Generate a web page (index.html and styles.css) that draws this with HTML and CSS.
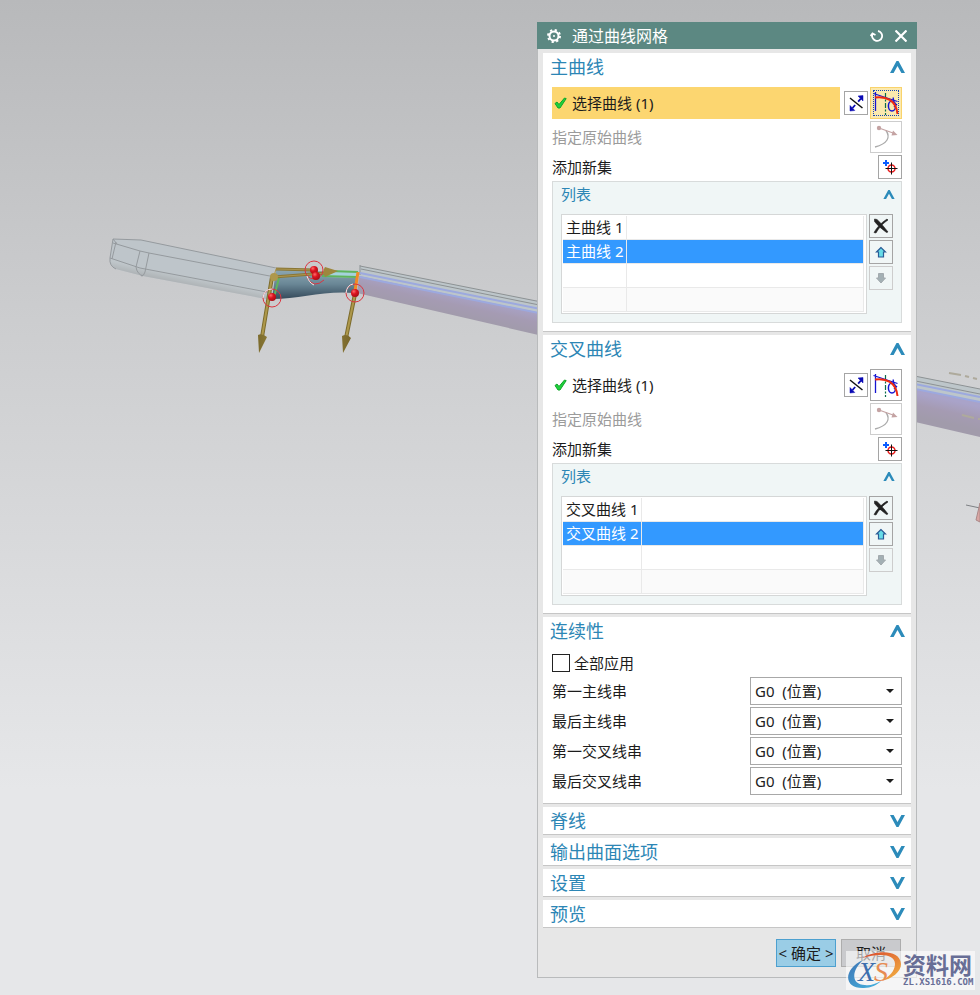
FILE: index.html
```
<!DOCTYPE html>
<html lang="zh-CN">
<head>
    <meta charset="UTF-8">
    <title>通过曲线网格</title>
    <link rel="stylesheet" href="styles.css">
</head>
<body>
    <!-- icons -->
    <svg class="sprite" aria-hidden="true">
        <symbol id="i-up" viewBox="0 0 15 12"><path d="M0 12 6.500 0h2L15 12h-3.600L7.500 5 3.600 12z"/></symbol>
        <symbol id="i-down" viewBox="0 0 15 12"><path d="M0 0 6.500 12h2L15 0h-3.600L7.500 7 3.600 0z"/></symbol>
        <symbol id="i-check" viewBox="0 0 13 12"><path d="M1 6.500 3 5l2 2.500L10.500 1l1.700.6L6 11H4z" fill="#1fd13c" stroke="#10a52a"/></symbol>
        <symbol id="i-reverse" viewBox="0 0 22 22">
            <path d="M5 6 17.500 16" stroke="#111" stroke-width="1.500"/>
            <path d="M7.500 16 16 6.500" stroke="#0a0ab4" stroke-width="1.800" stroke-dasharray="4 4.500"/>
            <path d="M18 3.500v5.500L13 4zM5 19v-5.500l4.800 5z" fill="#0a0ab4" stroke="#0a0ab4" stroke-width=".5"/>
        </symbol>
        <symbol id="i-curve" viewBox="0 0 30 30" fill="none">
            <path d="M14.500 5v22" stroke="#0b6b4a" stroke-width="1.200" stroke-dasharray="5 1.500 2 1.500"/>
            <path d="M4.500 4v19M2.500 5.500 26.500 13.500M22 9.500l1 4M26 16l-3 3" stroke="#1414d2" stroke-width="1.300"/>
            <ellipse cx="21" cy="18" rx="3.600" ry="5" stroke="#1414d2" stroke-width="1.500"/>
            <path d="M4 9.500C15 8 25 12 26.500 26" stroke="#ee2a10" stroke-width="2"/>
        </symbol>
        <symbol id="i-origin" viewBox="0 0 30 30" fill="none">
            <path d="M15 8.500c5 7 1 13.500-11 16.500" stroke="#aaa" stroke-width="1.300"/>
            <path d="M8 6l14 5" stroke="#c4a3a3" stroke-width="1.300"/>
            <circle cx="8" cy="6" r="2.200" fill="#c4a3a3"/>
            <path d="M20.500 13.500 22 8.500l4.500 4.500z" fill="#c4a3a3"/>
        </symbol>
        <symbol id="i-add" viewBox="0 0 22 22" fill="none">
            <path d="M7 4v6M4 7h6" stroke="#0b5cff" stroke-width="2"/>
            <circle cx="12.500" cy="12.500" r="3.500" stroke="#e81c1c" stroke-width="1.500"/>
            <path d="M12.500 6.500v12M6.500 12.500h12" stroke="#111"/>
        </symbol>
        <symbol id="i-delete" viewBox="0 0 22 22">
            <path d="M4.500 4 7 4.500C11 8 14 12 18 17l-1.500.5C12 14 8 11 4.500 6.500zM17 4l1 1C12 9 9 13 6 18l-2-.5C7 12 11 8 17 4z" fill="#222" stroke="#222" stroke-width=".6"/>
        </symbol>
        <symbol id="i-move-up" viewBox="0 0 22 22"><path d="M11 6.500 6.500 11H8.500v5h5v-5h2z" fill="#67dce8" stroke="#2a5c96" stroke-width="1.200"/></symbol>
        <symbol id="i-move-down" viewBox="0 0 22 22"><path d="M11 16l4.500-5H13.500V6.500h-5V11h-2z" fill="#a3b0b4" stroke="#a3aaae"/></symbol>
    </svg>

    <!-- model view -->
    <svg class="scene" viewBox="0 0 980 995" preserveAspectRatio="xMinYMin meet" fill="none" aria-hidden="true">
        <defs>
            <linearGradient id="blade" x1="0" y1="0" x2="0" y2="1">
                <stop offset="0" stop-color="#8fa9b4"/>
                <stop offset=".5" stop-color="#6a8796"/>
                <stop offset="1" stop-color="#34495a"/>
            </linearGradient>
            <linearGradient id="violet" gradientUnits="userSpaceOnUse" x1="540" y1="311" x2="535" y2="334">
                <stop offset="0" stop-color="#a9a3c9"/>
                <stop offset=".5" stop-color="#a59bb3"/>
                <stop offset="1" stop-color="#a19bab"/>
            </linearGradient>
            <radialGradient id="ball" cx=".35" cy=".3" r=".8">
                <stop offset="0" stop-color="#ff6a6a"/>
                <stop offset=".4" stop-color="#dc1420"/>
                <stop offset="1" stop-color="#a00c14"/>
            </radialGradient>
            <linearGradient id="gold">
                <stop offset="0" stop-color="#7c6b2c"/>
                <stop offset=".45" stop-color="#b8a252"/>
                <stop offset="1" stop-color="#78662a"/>
            </linearGradient>
            <linearGradient id="rim" gradientUnits="userSpaceOnUse" x1="200" y1="279" x2="198" y2="289">
                <stop offset="0" stop-color="#bfc6ca"/>
                <stop offset="1" stop-color="#a9adb0"/>
            </linearGradient>
        </defs>
        <!-- left body -->
        <path d="M113 239 141 240 275 268 272 300 143 276 116 269Q109 266 110 258z" fill="#bec5ca"/>
        <path d="M110 258 140 268 272 292V300L143 276 116 269Q110 266 110 258z" fill="url(#rim)"/>
        <g stroke="#959a9e">
            <path d="M113 239 141 240 276 268M113 243 140 251 149 253 275 277M110 258 140 268 272 293"/>
            <path d="M113 239 110 258Q109 266 116 269M116 242 112 259M113 239l4 5M140 251 136 267Q137 274 143 276M149 253 145 272Q144 276 141 276"/>
        </g>
        <!-- right body -->
        <path d="M360 266 980 389V402L359 278z" fill="#bdc6ca"/>
        <path d="M359 276 980 402V437L357 293z" fill="url(#violet)"/>
        <path d="M360 266 980 389M361 269 980 394M360 265V275" stroke="#8d9294"/>
        <path d="M360 273 980 397M360 277 980 402" stroke="#9ca9df" stroke-width="2"/>
        <path d="M949 373l12 2M965 376l4 1M973 378l4 1M962 415l12 3M978 419h2" stroke="#aeaa9c" stroke-width="2"/>
        <path d="M966 505l14 3" stroke="#7d8084"/>
        <path d="M980 503l-4 17 4 2z" fill="#d9a5a2" stroke="#a88"/>
        <!-- new surface -->
        <path d="M276 269 358 273 355 293C325 290 300 299 272 299z" fill="url(#blade)"/>
        <path d="M330 270 359 271V278L325 277z" fill="#a5d2dc"/>
        <path d="M330 271 358 272M322 276 357 277M279 278 274 297" stroke="#5fb45c" stroke-width="2"/>
        <path d="M358 272 355 291" stroke="#f08a25" stroke-width="3"/>
        <path d="M276 269 314 270M274 277 325 273" stroke="#8a7635" stroke-width="3"/>
        <path d="M276 269 314 270M274 277 325 273M276 269 273 279" stroke="#ac9650" stroke-width="1"/>
        <path d="M338 271 325 267Q322 271 325 277z" fill="#9d873d"/>
        <path d="M272 277 262 337M355 294 346 338" stroke="#7c6b2c" stroke-width="4"/>
        <path d="M272 277 262 337M355 294 346 338" stroke="#ae984b" stroke-width="2"/>
        <path d="M258 335Q262 333 267 337L259 353zM342 336Q347 333 351 338L343 353z" fill="url(#gold)"/>
        <circle cx="274" cy="277" r="4" fill="#ae984b"/>
        <g stroke="#db3540">
            <circle cx="272" cy="298" r="9"/>
            <circle cx="314" cy="270" r="9"/>
            <circle cx="355" cy="293" r="9"/>
            <path d="M307 278Q314 289 324 280"/>
        </g>
        <path d="M263 298Q264 289 272 289M346 293Q347 285 353 284M307 276Q309 283 314 285" stroke="#eee"/>
        <g fill="url(#ball)">
            <circle cx="272" cy="297" r="4"/>
            <circle cx="314" cy="270" r="4"/>
            <circle cx="316" cy="276" r="4"/>
            <circle cx="355" cy="293" r="4"/>
        </g>
    </svg>

    <div class="dialog" role="dialog" aria-labelledby="dialog-title">
        <div class="titlebar">
            <svg class="gear" width="14" height="14" viewBox="0 0 14 14" fill="none" stroke="#fff">
                <circle cx="7" cy="7" r="4.500" stroke-width="2"/>
                <circle cx="7" cy="7" r="6" stroke-width="2" stroke-dasharray="2.200 2.512"/>
                <circle cx="7" cy="7" r="1" fill="#fff" stroke="none"/>
            </svg>
            <h1 id="dialog-title">通过曲线网格</h1>
            <button type="button" class="tool" aria-label="重置">
                <svg width="14" height="14" viewBox="0 0 14 14" fill="none" stroke="#fff" stroke-width="1.800"><path d="M8 2A5 5 0 1 1 2.500 5M.5 7l2-2.500L5.500 6"/></svg>
            </button>
            <button type="button" class="tool" aria-label="关闭">
                <svg width="12" height="12" viewBox="0 0 12 12" stroke="#fff" stroke-width="2.200"><path d="M.5.5l11 11M11.500.5l-11 11"/></svg>
            </button>
        </div>

        <div class="panels">
            <section class="panel">
                <button type="button" class="panel-head" aria-expanded="true">主曲线<svg class="arrow"><use href="#i-up"/></svg></button>
                <div class="panel-body">
                    <div class="row row-lg">
                        <div class="pick active"><svg class="check"><use href="#i-check"/></svg>选择曲线 (1)</div>
                        <button type="button" class="btn" aria-label="反向"><svg><use href="#i-reverse"/></svg></button>
                        <button type="button" class="btn btn-lg active" aria-label="曲线"><svg><use href="#i-curve"/></svg></button>
                    </div>
                    <div class="row row-lg">
                        <span class="label disabled">指定原始曲线</span>
                        <button type="button" class="btn btn-lg" aria-label="原始曲线" disabled><svg><use href="#i-origin"/></svg></button>
                    </div>
                    <div class="row">
                        <span class="label">添加新集</span>
                        <button type="button" class="btn" aria-label="添加新集"><svg><use href="#i-add"/></svg></button>
                    </div>
                    <div class="list">
                        <button type="button" class="list-head" aria-expanded="true">列表<svg class="arrow-sm"><use href="#i-up"/></svg></button>
                        <div class="list-body">
                            <div class="grid">
                                <table>
                                    <tr><td>主曲线 1</td><td></td></tr>
                                    <tr class="selected"><td>主曲线 2</td><td></td></tr>
                                    <tr><td></td><td></td></tr>
                                    <tr class="alt"><td></td><td></td></tr>
                                </table>
                            </div>
                            <div class="list-tools">
                                <button type="button" class="btn" aria-label="移除"><svg><use href="#i-delete"/></svg></button>
                                <button type="button" class="btn" aria-label="上移"><svg><use href="#i-move-up"/></svg></button>
                                <button type="button" class="btn" aria-label="下移" disabled><svg><use href="#i-move-down"/></svg></button>
                            </div>
                        </div>
                    </div>
                </div>
            </section>

            <section class="panel">
                <button type="button" class="panel-head" aria-expanded="true">交叉曲线<svg class="arrow"><use href="#i-up"/></svg></button>
                <div class="panel-body">
                    <div class="row row-lg">
                        <div class="pick"><svg class="check"><use href="#i-check"/></svg>选择曲线 (1)</div>
                        <button type="button" class="btn" aria-label="反向"><svg><use href="#i-reverse"/></svg></button>
                        <button type="button" class="btn btn-lg" aria-label="曲线"><svg><use href="#i-curve"/></svg></button>
                    </div>
                    <div class="row row-lg">
                        <span class="label disabled">指定原始曲线</span>
                        <button type="button" class="btn btn-lg" aria-label="原始曲线" disabled><svg><use href="#i-origin"/></svg></button>
                    </div>
                    <div class="row">
                        <span class="label">添加新集</span>
                        <button type="button" class="btn" aria-label="添加新集"><svg><use href="#i-add"/></svg></button>
                    </div>
                    <div class="list">
                        <button type="button" class="list-head" aria-expanded="true">列表<svg class="arrow-sm"><use href="#i-up"/></svg></button>
                        <div class="list-body">
                            <div class="grid">
                                <table>
                                    <tr><td>交叉曲线 1</td><td></td></tr>
                                    <tr class="selected"><td>交叉曲线 2</td><td></td></tr>
                                    <tr><td></td><td></td></tr>
                                    <tr class="alt"><td></td><td></td></tr>
                                </table>
                            </div>
                            <div class="list-tools">
                                <button type="button" class="btn" aria-label="移除"><svg><use href="#i-delete"/></svg></button>
                                <button type="button" class="btn" aria-label="上移"><svg><use href="#i-move-up"/></svg></button>
                                <button type="button" class="btn" aria-label="下移" disabled><svg><use href="#i-move-down"/></svg></button>
                            </div>
                        </div>
                    </div>
                </div>
            </section>

            <section class="panel">
                <button type="button" class="panel-head" aria-expanded="true">连续性<svg class="arrow"><use href="#i-up"/></svg></button>
                <div class="panel-body">
                    <div class="row">
                        <label class="apply"><input type="checkbox">全部应用</label>
                    </div>
                    <div class="row">
                        <label class="label" for="first-main">第一主线串</label>
                        <div class="select"><select id="first-main"><option>G0&nbsp;&nbsp;(位置)</option></select></div>
                    </div>
                    <div class="row">
                        <label class="label" for="last-main">最后主线串</label>
                        <div class="select"><select id="last-main"><option>G0&nbsp;&nbsp;(位置)</option></select></div>
                    </div>
                    <div class="row">
                        <label class="label" for="first-cross">第一交叉线串</label>
                        <div class="select"><select id="first-cross"><option>G0&nbsp;&nbsp;(位置)</option></select></div>
                    </div>
                    <div class="row">
                        <label class="label" for="last-cross">最后交叉线串</label>
                        <div class="select"><select id="last-cross"><option>G0&nbsp;&nbsp;(位置)</option></select></div>
                    </div>
                </div>
            </section>

            <section class="panel">
                <button type="button" class="panel-head" aria-expanded="false">脊线<svg class="arrow"><use href="#i-down"/></svg></button>
            </section>
            <section class="panel">
                <button type="button" class="panel-head" aria-expanded="false">输出曲面选项<svg class="arrow"><use href="#i-down"/></svg></button>
            </section>
            <section class="panel">
                <button type="button" class="panel-head" aria-expanded="false">设置<svg class="arrow"><use href="#i-down"/></svg></button>
            </section>
            <section class="panel">
                <button type="button" class="panel-head" aria-expanded="false">预览<svg class="arrow"><use href="#i-down"/></svg></button>
            </section>
        </div>

        <div class="footer">
            <button type="button" class="action primary">&lt; 确定 &gt;</button>
            <button type="button" class="action">取消</button>
        </div>
    </div>

    <div class="watermark">
        <svg width="56" height="38" viewBox="0 0 56 38" fill="none">
            <defs>
                <linearGradient id="ring-blue" x1="0" y1="0" x2="1" y2="1"><stop offset="0" stop-color="#3f74b4"/><stop offset="1" stop-color="#45b4e0"/></linearGradient>
                <linearGradient id="ring-warm" x1="0" y1="0" x2="1" y2="1"><stop offset="0" stop-color="#d8442c"/><stop offset="1" stop-color="#f3b743"/></linearGradient>
            </defs>
            <path d="M17 9C-3 18-3 38 18 37c7 0 13-3 17-7-6 3-11 5-16 4C4 33 6 19 17 9z" fill="url(#ring-blue)"/>
            <path d="M16 7C30-1 54-2 55 13c0 8-9 15-20 17 8-4 14-10 14-17C49 3 34 2 16 7z" fill="url(#ring-warm)"/>
            <text class="mark-x" x="12" y="30">X</text>
            <text class="mark-s" x="28" y="30">S</text>
        </svg>
        <div class="mark-text">
            <strong>资料网</strong>
            <span>ZL.XS1616.COM</span>
        </div>
    </div>
</body>
</html>
```
FILE: styles.css
```
*{box-sizing:border-box;}
body{
    position:relative;
    min-height:100vh;
    margin:0;
    padding:22px 63px 17px 20px;
    font:15px/24px "Noto Sans","Noto Sans CJK SC",sans-serif;
    color:#1c1c1c;
    background:linear-gradient(#b8b9bb 0,#cccdcf 320px,#e6e7e9 790px,#e6e7e9 100%);
}
h1{margin:0;font-size:16px;font-weight:normal;}
button{margin:0;padding:0;border:0;background:none;font:inherit;color:inherit;}
svg{display:block;flex:none;}
.sprite{position:absolute;width:0;height:0;}
.scene{position:absolute;top:0;left:0;width:100%;max-width:980px;height:auto;}

.dialog{
    position:relative;
    width:100%;
    max-width:380px;
    margin-left:auto;
    border:solid #b9bbbc;
    border-width:0 1px 1px;
    background:#e7e7e7;
}
.titlebar{
    display:flex;
    align-items:center;
    gap:11px;
    height:27px;
    margin:0 -1px;
    padding:0 10px;
    background:#5c8882;
    color:#fff;
}
.titlebar h1{flex:1;}

.panels{display:flex;flex-direction:column;gap:3px;padding:4px 5px 0;}
.panel{border-bottom:1px solid #c6c6c6;background:#fff;}
.panel-head{
    display:flex;
    align-items:center;
    justify-content:space-between;
    width:100%;
    height:27px;
    padding:0 6px 0 7px;
    font-size:18px;
    color:#2c86b5;
}
.arrow{width:15px;height:12px;fill:#2c8bba;}
.arrow-sm{width:12px;height:9px;fill:#2c8bba;}
.panel-body{display:flex;flex-direction:column;gap:2px;padding:7px 9px 8px;}

.row{display:flex;align-items:center;gap:2px;min-height:24px;}
.row-lg{min-height:32px;}
.label{flex:1;}
.disabled{color:#9b9b9b;}
.pick{display:flex;flex:1;align-items:center;gap:5px;height:32px;margin-right:2px;padding-left:2px;}
.pick.active{background:#fcd670;}
.check{width:13px;height:12px;}
.btn{flex:none;width:24px;height:24px;border:1px solid #a5a5a5;background:#fff;}
.btn svg{width:100%;height:100%;}
.btn-lg{width:32px;height:32px;}
.btn:disabled{border-color:#cdcdcd;}
.btn.active{border-color:#f9d36c;background:#fbe9ae;outline:1px dotted #1546b5;outline-offset:-4px;}

.list{border:1px solid #d8dbdb;background:#f0f6f6;}
.list-head{
    display:flex;
    align-items:center;
    justify-content:space-between;
    width:100%;
    height:24px;
    padding:0 6px 0 8px;
    color:#2c86b5;
}
.list-body{display:flex;gap:2px;padding:8px;}
.grid{flex:1;height:100px;padding:1px 2px 1px 1px;border:1px solid #d5d7d7;background:#fff;}
.grid table{width:100%;border-collapse:separate;border-spacing:0;}
.grid td{height:24px;padding:0 3px;border:solid #e9e9e9;border-width:0 1px 1px 0;line-height:23px;white-space:nowrap;}
.grid td:first-child{width:1px;}
.grid .selected td{background:#3399ff;color:#fff;}
.grid .alt td{background:#fafafa;}
.list-tools{display:flex;flex-direction:column;gap:2px;}
.list-tools .btn{background:#f0f6f6;}

.apply{display:flex;align-items:center;gap:4px;}
.apply input{appearance:none;width:18px;height:18px;margin:0;border:1px solid #222;background:#fff;}
.apply input:checked{background:#5c8882;}
.select{position:relative;width:152px;}
.select select{
    display:block;
    appearance:none;
    width:100%;
    height:28px;
    padding:0 20px 0 4px;
    border:1px solid #a8a8a8;
    border-radius:0;
    background:#fff;
    font:inherit;
    color:inherit;
}
.select:after{
    content:"";
    position:absolute;
    top:12px;
    right:8px;
    border:4px solid transparent;
    border-top-color:#1c1c1c;
    border-bottom:0;
    pointer-events:none;
}

.footer{display:flex;justify-content:flex-end;gap:5px;padding:11px 15px 10px;}
.action{width:60px;height:28px;border:1px solid #adadad;background:#c9cacd;white-space:nowrap;}
.action.primary{border-color:#4da0cf;background:#9acde6;}

.watermark{
    position:absolute;
    right:5px;
    bottom:5px;
    display:flex;
    width:129px;
    height:39px;
    background:rgba(255,255,255,.6);
}
.mark-x,.mark-s{font:italic 28px "Liberation Serif",serif;}
.mark-x{fill:#3d6fae;}
.mark-s{fill:#e78b52;}
.mark-text{display:flex;flex-direction:column;padding-left:1px;color:#686e96;}
.mark-text strong{font:bold 23px/26px "Noto Sans CJK SC",sans-serif;}
.mark-text span{font:bold 9px/10px "DejaVu Sans Mono",monospace;}
```
